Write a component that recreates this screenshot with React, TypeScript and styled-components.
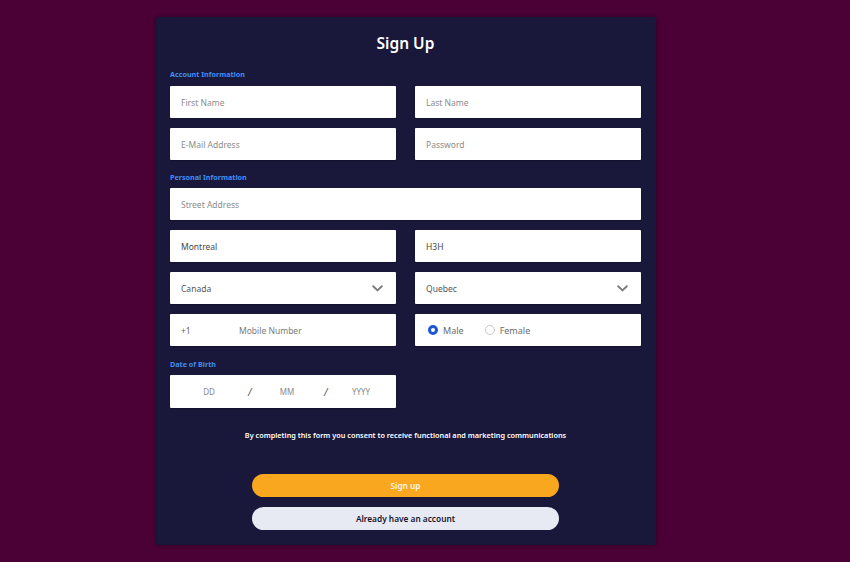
import { ReactElement } from 'react';
import styled, { createGlobalStyle } from 'styled-components';

const GlobalStyle = createGlobalStyle`
  html, body {
    margin: 0;
    padding: 0;
    background: #4b0036;
    font-family: "Noto Sans", "Open Sans", sans-serif;
  }
  * { box-sizing: border-box; }
`;

const Styled = {
  Page: styled.main`
    min-height: 562px;
    padding: 17px 0 0 156px;
  `,
  Card: styled.section`
    width: 500px;
    height: 528px;
    background: #19173a;
    border-radius: 3px;
    box-shadow: 0 0 4px rgba(20, 0, 20, 0.6);
    padding: 16px 15px 15px 14px;
    display: flex;
    flex-direction: column;
  `,
  Title: styled.h1`
    margin: 0;
    height: 20px;
    line-height: 20px;
    text-align: center;
    color: #ffffff;
    font-size: 15.5px;
    font-weight: 600;
  `,
  SectionLabel: styled.h2<{ $top: number; $bottom: number }>`
    margin: ${({ $top }) => $top}px 0 ${({ $bottom }) => $bottom}px;
    height: 10px;
    line-height: 10px;
    font-size: 7.2px;
    font-weight: 700;
    color: #3f8ef2;
  `,
  Grid: styled.div`
    display: grid;
    grid-template-columns: 226px 226px;
    column-gap: 19px;
    row-gap: 10px;
  `,
  Field: styled.input<{ $wide?: boolean }>`
    grid-column: ${({ $wide }) => ($wide ? '1 / -1' : 'auto')};
    height: 32px;
    border: none;
    border-radius: 1px;
    background: #ffffff;
    padding: 0 11px;
    font-family: inherit;
    font-size: 8.5px;
    color: #474747;
    outline: none;
    box-shadow: 0 1px 1px rgba(0, 0, 0, 0.25);
    &::placeholder {
      color: #8c8c8c;
    }
  `,
  Box: styled.div`
    height: 32px;
    background: #ffffff;
    border-radius: 1px;
    padding: 0 13px 0 11px;
    display: flex;
    align-items: center;
    font-size: 8.5px;
    color: #555;
    box-shadow: 0 1px 1px rgba(0, 0, 0, 0.25);
  `,
  Spacer: styled.span`
    flex: 1;
  `,
  Prefix: styled.span`
    width: 58px;
    color: #666;
  `,
  Muted: styled.span`
    color: #7a7a7a;
  `,
  Radio: styled.span<{ $checked?: boolean }>`
    width: 10px;
    height: 10px;
    border-radius: 50%;
    margin: 0 5px 0 2px;
    border: ${({ $checked }) =>
      $checked ? '3px solid #1b57d4' : '1px solid #c9c9c9'};
    background: #fff;
  `,
  RadioLabel: styled.span`
    color: #6b6b6b;
    font-size: 9px;
    margin-right: 19px;
  `,
  DateBox: styled.div`
    width: 226px;
    height: 33px;
    background: #ffffff;
    border-radius: 1px;
    display: grid;
    grid-template-columns: 78px 2px 74px 2px 1fr;
    align-items: center;
    text-align: center;
    font-size: 8px;
    color: #888;
    box-shadow: 0 1px 1px rgba(0, 0, 0, 0.25);
  `,
  Slash: styled.span`
    color: #555;
    font-size: 10px;
    font-style: italic;
  `,
  Consent: styled.p`
    margin: 22px 0 0;
    height: 10px;
    line-height: 10px;
    text-align: center;
    color: #ffffff;
    font-size: 7.3px;
    font-weight: 600;
  `,
  Actions: styled.div`
    margin-top: 34px;
    display: flex;
    flex-direction: column;
    align-items: center;
    gap: 10px;
  `,
  Button: styled.button<{ $primary?: boolean }>`
    width: 307px;
    height: 23px;
    border: none;
    border-radius: 12px;
    font-family: inherit;
    font-size: 8.3px;
    font-weight: 600;
    background: ${({ $primary }) => ($primary ? '#f9a71f' : '#e7eaf3')};
    color: ${({ $primary }) => ($primary ? '#fff7e8' : '#17152e')};
    cursor: pointer;
  `,
};

const Chevron = (): ReactElement => (
  <svg width="11" height="7" viewBox="0 0 11 7" aria-hidden>
    <path
      d="M1.2 1.2 L5.5 5.4 L9.8 1.2"
      fill="none"
      stroke="#7b7b7b"
      strokeWidth="1.9"
      strokeLinecap="round"
      strokeLinejoin="round"
    />
  </svg>
);

export default function App(): ReactElement {
  return (
    <>
      <GlobalStyle />
      <Styled.Page>
        <Styled.Card>
          <Styled.Title>Sign Up</Styled.Title>

          <Styled.SectionLabel $top={16} $bottom={7}>
            Account Information
          </Styled.SectionLabel>
          <Styled.Grid>
            <Styled.Field placeholder="First Name" />
            <Styled.Field placeholder="Last Name" />
            <Styled.Field placeholder="E-Mail Address" />
            <Styled.Field placeholder="Password" type="password" />
          </Styled.Grid>

          <Styled.SectionLabel $top={12} $bottom={6}>
            Personal Information
          </Styled.SectionLabel>
          <Styled.Grid>
            <Styled.Field $wide placeholder="Street Address" />
            <Styled.Field defaultValue="Montreal" />
            <Styled.Field defaultValue="H3H" />
            <Styled.Box>
              Canada
              <Styled.Spacer />
              <Chevron />
            </Styled.Box>
            <Styled.Box>
              Quebec
              <Styled.Spacer />
              <Chevron />
            </Styled.Box>
            <Styled.Box>
              <Styled.Prefix>+1</Styled.Prefix>
              <Styled.Muted>Mobile Number</Styled.Muted>
            </Styled.Box>
            <Styled.Box>
              <Styled.Radio $checked />
              <Styled.RadioLabel>Male</Styled.RadioLabel>
              <Styled.Radio />
              <Styled.RadioLabel>Female</Styled.RadioLabel>
            </Styled.Box>
          </Styled.Grid>

          <Styled.SectionLabel $top={13} $bottom={6}>
            Date of Birth
          </Styled.SectionLabel>
          <Styled.DateBox>
            <span>DD</span>
            <Styled.Slash>/</Styled.Slash>
            <span>MM</span>
            <Styled.Slash>/</Styled.Slash>
            <span>YYYY</span>
          </Styled.DateBox>

          <Styled.Consent>
            By completing this form you consent to receive functional and
            marketing communications
          </Styled.Consent>

          <Styled.Actions>
            <Styled.Button $primary>Sign up</Styled.Button>
            <Styled.Button>Already have an account</Styled.Button>
          </Styled.Actions>
        </Styled.Card>
      </Styled.Page>
    </>
  );
}
